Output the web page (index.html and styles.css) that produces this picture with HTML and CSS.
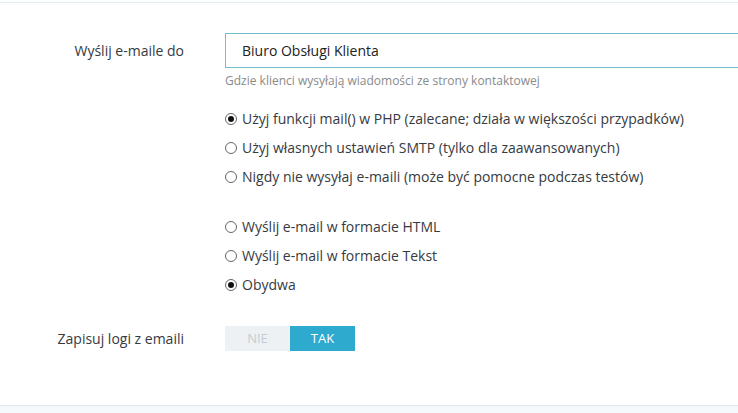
FILE: index.html
```html
<!DOCTYPE html>
<html lang="pl">
<head>
<meta charset="utf-8">
<title>Ustawienia e-mail</title>
<link rel="stylesheet" href="styles.css">
</head>
<body>
<div class="panel">
  <div class="form-group first">
    <label class="control-label">Wyślij e-maile do</label>
    <div class="control">
      <div class="input">Biuro Obsługi Klienta</div>
      <p class="help">Gdzie klienci wysyłają wiadomości ze strony kontaktowej</p>
    </div>
  </div>
  <div class="form-group radios">
    <div></div>
    <div class="control">
      <div class="radio"><span class="dot checked"></span>Użyj funkcji mail() w PHP (zalecane; działa w większości przypadków)</div>
      <div class="radio"><span class="dot"></span>Użyj własnych ustawień SMTP (tylko dla zaawansowanych)</div>
      <div class="radio"><span class="dot"></span>Nigdy nie wysyłaj e-maili (może być pomocne podczas testów)</div>
    </div>
  </div>
  <div class="form-group radios second">
    <div></div>
    <div class="control">
      <div class="radio"><span class="dot"></span>Wyślij e-mail w formacie HTML</div>
      <div class="radio"><span class="dot"></span>Wyślij e-mail w formacie Tekst</div>
      <div class="radio"><span class="dot checked"></span>Obydwa</div>
    </div>
  </div>
  <div class="form-group toggle-row">
    <label class="control-label">Zapisuj logi z emaili</label>
    <div class="control">
      <div class="switch"><span class="off">NIE</span><span class="on">TAK</span></div>
    </div>
  </div>
</div>
<div class="footer"></div>
</body>
</html>
```
FILE: styles.css
```css
html, body {
  margin: 0;
  padding: 0;
  background: #ffffff;
  overflow: hidden;
}
body {
  font-family: "Open Sans", "Noto Sans", sans-serif;
  font-size: 14px;
  color: #363a41;
  padding-top: 2px;
  width: 738px;
  height: 413px;
  box-sizing: border-box;
}
.panel {
  border-top: 1px solid #e1edf1;
  height: 403px;
  box-sizing: border-box;
}
.form-group {
  display: grid;
  grid-template-columns: 184px 1fr;
  column-gap: 41px;
}
.control {
  min-width: 0;
}
.control-label {
  text-align: right;
  color: #363a41;
}
.first {
  padding-top: 30px;
}
.first .control-label {
  line-height: 35px;
}
.input {
  height: 35px;
  box-sizing: border-box;
  border: 1px solid #6fbfcf;
  border-right: none;
  padding-left: 16px;
  line-height: 33px;
  color: #222;
}
.help {
  margin: 5px 0 0;
  font-size: 12px;
  line-height: 16px;
  color: #8a8a8a;
}
.radios {
  margin-top: 15px;
}
.radios.second {
  margin-top: 21px;
}
.radio {
  display: flex;
  align-items: center;
  height: 29px;
  color: #363a41;
  white-space: nowrap;
}
.dot {
  width: 12px;
  height: 12px;
  box-sizing: border-box;
  border: 1px solid #666;
  border-radius: 50%;
  margin-right: 5px;
  display: flex;
  align-items: center;
  justify-content: center;
  flex: none;
}
.dot.checked::after {
  content: "";
  width: 6px;
  height: 6px;
  border-radius: 50%;
  background: #111;
}
.toggle-row {
  margin-top: 27px;
}
.toggle-row .control-label {
  line-height: 25px;
}
.switch {
  display: flex;
  width: 130px;
  height: 25px;
  font-size: 13px;
  line-height: 25px;
  text-align: center;
}
.switch .off {
  flex: 1;
  background: #eef1f4;
  color: #c4ccd3;
}
.switch .on {
  flex: 1;
  background: #2eaacf;
  color: #ffffff;
}
.footer {
  border-top: 1px solid #dbe7eb;
  background: #f5f9fb;
  height: 20px;
}
```
